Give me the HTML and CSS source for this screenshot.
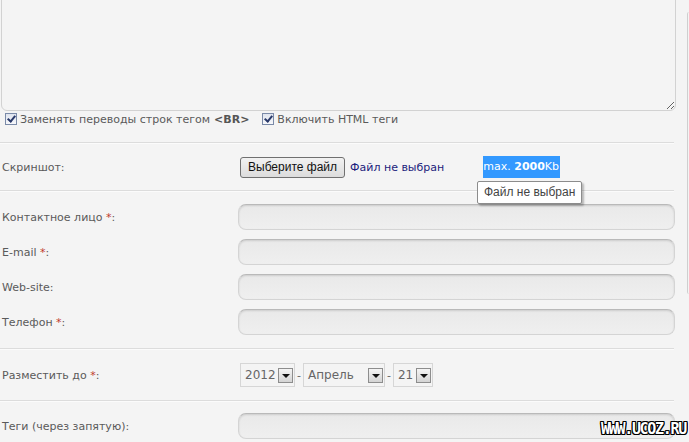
FILE: index.html
```html
<!DOCTYPE html>
<html lang="ru">
<head>
    <meta charset="UTF-8">
    <title>Добавить материал</title>
    <link rel="stylesheet" href="styles.css">
</head>
<body>
    <div class="page">
        <form class="form">
            <textarea class="message"></textarea>

            <div class="opts">
                <label class="opt"><span class="check"></span>Заменять переводы строк тегом <b>&lt;BR&gt;</b></label>
                <label class="opt"><span class="check"></span>Включить HTML теги</label>
            </div>

            <div class="sep"></div>

            <div class="row row-file">
                <div class="lbl">Скриншот:</div>
                <div class="ctl">
                    <span class="file-btn">Выберите файл</span>
                    <span class="file-none">Файл не выбран</span>
                    <span class="max">max. <b>2000</b>Kb</span>
                    <span class="tip">Файл не выбран</span>
                </div>
            </div>

            <div class="sep"></div>

            <div class="fields">
                <div class="row">
                    <div class="lbl">Контактное лицо <span class="req">*</span>:</div>
                    <div class="ctl"><span class="input"></span></div>
                </div>
                <div class="row">
                    <div class="lbl">E-mail <span class="req">*</span>:</div>
                    <div class="ctl"><span class="input"></span></div>
                </div>
                <div class="row">
                    <div class="lbl">Web-site:</div>
                    <div class="ctl"><span class="input"></span></div>
                </div>
                <div class="row">
                    <div class="lbl">Телефон <span class="req">*</span>:</div>
                    <div class="ctl"><span class="input"></span></div>
                </div>
            </div>

            <div class="sep"></div>

            <div class="row row-date">
                <div class="lbl">Разместить до <span class="req">*</span>:</div>
                <div class="ctl">
                    <span class="sel sel-year">2012<i class="arr"></i></span>
                    <span class="dash">-</span>
                    <span class="sel sel-month">Апрель<i class="arr"></i></span>
                    <span class="dash">-</span>
                    <span class="sel sel-day">21<i class="arr"></i></span>
                </div>
            </div>

            <div class="sep"></div>

            <div class="row row-tags">
                <div class="lbl">Теги (через запятую):</div>
                <div class="ctl"><span class="input"></span></div>
            </div>
        </form>
        <div class="side"></div>
    </div>
    <div class="mark">www.ucoz.ru</div>
</body>
</html>
```

FILE: styles.css
```css
body {
    margin: 0;
    background: #f4f4f4;
    font-family: "DejaVu Sans", Tahoma, sans-serif;
    font-size: 11px;
    color: #5a5a5a;
    overflow: hidden;
}

.page {
    display: flex;
    height: 442px;
}

.form {
    width: 676px;
}

.side {
    margin: 12px 0 0 11px;
    width: 4px;
    height: 282px;
    border-left: 1px solid #cfcfcf;
    border-radius: 4px 0 0 4px;
}

.message {
    display: block;
    box-sizing: border-box;
    width: 675px;
    height: 131px;
    margin: -20px 0 0 1px;
    background: #f4f4f4;
    border: 1px solid #d2d2d2;
    border-radius: 0 0 6px 6px;
    resize: both;
}

.opts {
    display: flex;
    align-items: center;
    height: 16px;
    padding-left: 5px;
    gap: 13px;
}

.opt {
    display: flex;
    align-items: center;
}

.opt b {
    margin-left: 4px;
    color: #555;
}

.check {
    width: 10px;
    height: 10px;
    margin-right: 3px;
    border: 1px solid #7a8aa8;
    background: linear-gradient(#dfe4ee, #f6f7fa);
    position: relative;
}

.check::after {
    content: "";
    position: absolute;
    left: 3px;
    top: 0;
    width: 3px;
    height: 6px;
    border: solid #2a3a6a;
    border-width: 0 2px 2px 0;
    transform: rotate(40deg);
}

.sep {
    height: 1px;
    margin-right: 2px;
    background: #dcdcdc;
    border-bottom: 1px solid #fbfbfb;
}

.opts + .sep {
    margin-top: 15px;
}

.row {
    display: flex;
    align-items: center;
}

.lbl {
    width: 238px;
    padding-left: 2px;
    box-sizing: border-box;
    flex: none;
}

.req {
    color: #c0392b;
}

.ctl {
    flex: 1;
    display: flex;
    align-items: center;
    position: relative;
}

.row-file {
    height: 46px;
    position: relative;
    z-index: 2;
}

.file-btn {
    margin-left: 2px;
    padding: 2px 7px 3px;
    border: 1px solid #707070;
    border-radius: 3px;
    background: linear-gradient(#f2f2f2, #dcdcdc);
    color: #111;
    font-family: "Liberation Sans", Arial, sans-serif;
    font-size: 12px;
}

.file-none {
    margin-left: 5px;
    color: #1c1c7c;
    font-size: 11px;
}

.max {
    margin-left: 39px;
    padding: 0 1px 0 0;
    line-height: 22px;
    background: #3399ff;
    color: #fff;
    font-size: 11px;
}

.max b {
    font-size: 11px;
}

.tip {
    position: absolute;
    left: 239px;
    top: 25px;
    padding: 3px 6px 4px;
    background: #fff;
    border: 1px solid #8c8c8c;
    border-radius: 2px;
    box-shadow: 2px 2px 2px rgba(0, 0, 0, 0.25);
    color: #444;
    font-family: "Liberation Sans", Arial, sans-serif;
    font-size: 12px;
    white-space: nowrap;
}

.fields {
    display: flex;
    flex-direction: column;
    gap: 9px;
    padding: 12px 0 13px;
}

.input {
    display: block;
    width: 435px;
    height: 24px;
    border: 1px solid #d4d4d4;
    border-top-color: #b9b9b9;
    border-radius: 8px;
    background: linear-gradient(#e9e9e9, #efefef);
    box-shadow: inset 0 1px 2px rgba(0, 0, 0, 0.12);
}

.row-date {
    height: 24px;
    padding: 13px 0 13px;
}

.sel {
    display: flex;
    align-items: center;
    justify-content: space-between;
    box-sizing: border-box;
    height: 24px;
    padding: 0 1px 0 4px;
    border: 1px solid #d6d6d6;
    background: #f4f4f4;
    font-size: 12px;
    color: #666;
}

.sel-year { width: 55px; margin-left: 2px; }
.sel-month { width: 82px; }
.sel-day { width: 40px; }

.arr {
    width: 15px;
    height: 15px;
    box-sizing: border-box;
    border: 1px solid #8d8d8d;
    background: linear-gradient(#f4f4f4, #d4d4d4);
    position: relative;
}

.arr::after {
    content: "";
    position: absolute;
    left: 3px;
    top: 5px;
    border: 4px solid transparent;
    border-top: 4px solid #111;
    border-bottom: 0;
}

.dash {
    padding: 0 2px;
    color: #666;
}

.row-tags {
    padding-top: 11px;
}

.mark {
    position: absolute;
    right: 3px;
    bottom: 4px;
    font-family: "DejaVu Sans Mono", monospace;
    font-weight: bold;
    font-size: 15px;
    letter-spacing: -1.3px;
    text-transform: uppercase;
    color: #fff;
    text-shadow: 1px 0 #000, -1px 0 #000, 0 1px #000, 0 -1px #000, 1px 1px #000, -1px -1px #000, 1px -1px #000, -1px 1px #000;
}
```
